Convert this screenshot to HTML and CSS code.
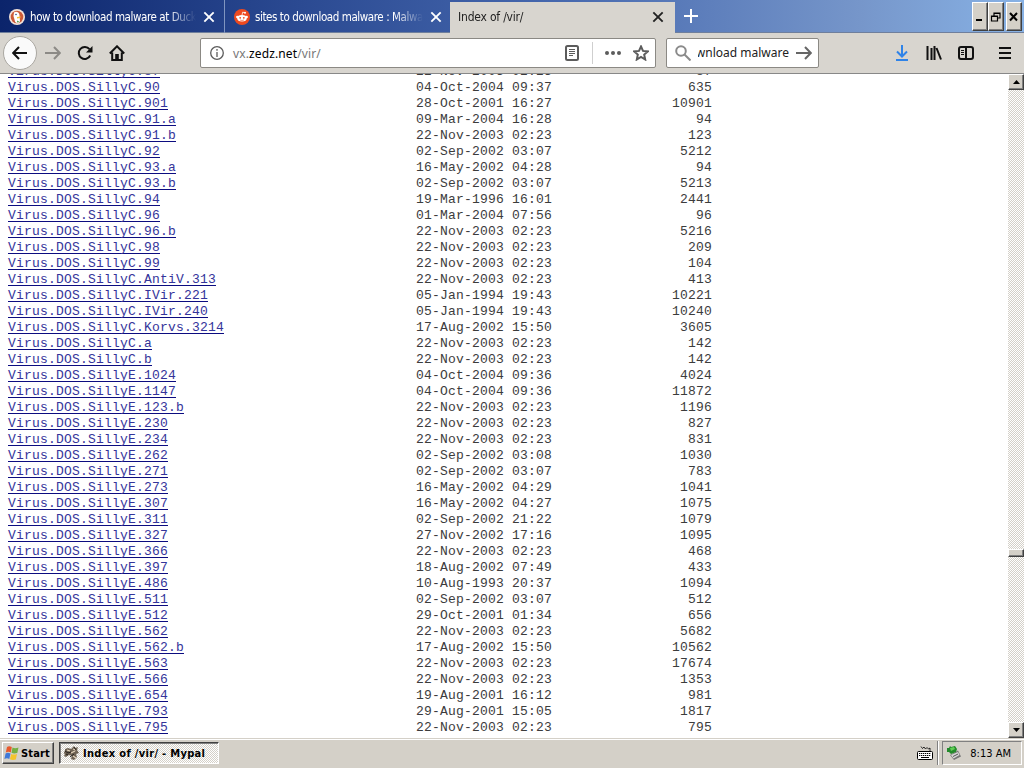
FILE: index.html
```html
<!DOCTYPE html>
<html lang="en">
<head>
    <meta charset="UTF-8">
    <title>Index of /vir/</title>
    <link rel="stylesheet" href="styles.css">
</head>
<body>
    <div class="tab-bar">
        <div class="tab">
            <svg class="favicon" viewBox="0 0 16 16">
                <circle cx="8" cy="8" r="8" fill="#f3e3da"/>
                <circle cx="8" cy="8" r="6.300" fill="#cc5a38"/>
                <path d="M5 3.500c2-1.500 5-.5 5.500 2.500l.5 7c-1.500 1.500-3.500 1.500-4.800 0L4.500 7z" fill="#fff"/>
                <path d="M8 8l4-.6-1 1.600-3 .4z" fill="#f5c03a"/>
                <circle cx="7" cy="5.500" r=".8" fill="#2d4f8e"/>
                <path d="M8 11.500l3 1.500-3 .5z" fill="#5b9e4d"/>
            </svg>
            <span class="tab-title">how to download malware at Duck</span>
            <svg class="close" viewBox="0 0 12 12"><path d="M2 2l8 8M10 2l-8 8"/></svg>
        </div>
        <div class="tab tab-second">
            <svg class="favicon" viewBox="0 0 16 16">
                <circle cx="8" cy="8" r="8" fill="#ee4a20"/>
                <ellipse cx="8" cy="9.300" rx="4.700" ry="3.300" fill="#fff"/>
                <circle cx="3.300" cy="8" r="1.200" fill="#fff"/>
                <circle cx="12.700" cy="8" r="1.200" fill="#fff"/>
                <circle cx="11" cy="3.800" r="1" fill="#fff"/>
                <path d="M8 6l.7-2.800 2 .5" fill="none" stroke="#fff" stroke-width=".8"/>
                <path d="M6 11q2 1 4 0" fill="none" stroke="#ee4a20" stroke-width=".6"/>
                <circle cx="6.200" cy="8.800" r=".9" fill="#ee4a20"/>
                <circle cx="9.800" cy="8.800" r=".9" fill="#ee4a20"/>
            </svg>
            <span class="tab-title">sites to download malware : Malwa</span>
            <svg class="close" viewBox="0 0 12 12"><path d="M2 2l8 8M10 2l-8 8"/></svg>
        </div>
        <div class="tab tab-active">
            <span class="tab-title">Index of /vir/</span>
            <svg class="close" viewBox="0 0 12 12"><path d="M2 2l8 8M10 2l-8 8"/></svg>
        </div>
        <svg class="new-tab" viewBox="0 0 14 14"><path d="M7 0v14M0 7h14"/></svg>
        <div class="window-buttons">
            <button><svg viewBox="0 0 12 12"><path d="M2 9h6" stroke="#000" stroke-width="2"/></svg></button>
            <button><svg viewBox="0 0 12 12"><path d="M4 4.500V2h6v5H8M4 2.500h6M1.500 5H7.500v5h-6zM1.500 5.500h6" fill="none" stroke="#000" stroke-width="1.200"/></svg></button>
            <button class="window-close"><svg viewBox="0 0 12 12"><path d="M2 2l7 7.500M9 2l-7 7.500" stroke="#000" stroke-width="2"/></svg></button>
        </div>
    </div>

    <div class="toolbar">
        <div class="back">
            <svg viewBox="0 0 16 16"><path d="M15 8H1.500M7 2L1.200 8 7 14"/></svg>
        </div>
        <svg class="icon forward" viewBox="0 0 16 16"><path d="M0 8h14.500M9 2l5.800 6L9 14"/></svg>
        <svg class="icon reload" viewBox="0 0 16 16"><path d="M13.200 10.500A6 6 0 1 1 12.500 4.200"/><path class="solid" d="M15.500 1v6.500H9z"/></svg>
        <svg class="icon home" viewBox="0 0 16 16"><path d="M.8 8.500L8 1.300l7.200 7.200M3.200 7.500V15h9.600V7.500"/><path class="solid" d="M6.200 9h3.600v6H6.200z"/></svg>
        <div class="url-bar">
            <svg class="info" viewBox="0 0 14 14"><circle cx="7" cy="7" r="6.300"/><path d="M7 6v5M7 3v1.700"/></svg>
            <span class="url">vx.<b>zedz.net</b>/vir/</span>
            <svg class="reader" viewBox="0 0 14 16"><rect x="1" y="1" width="12" height="14" rx="1.500"/><path class="thin" d="M4 4.500h6M4 6.500h6M4 8.500h6M4 10.500h4"/></svg>
            <span class="separator"></span>
            <svg class="dots" viewBox="0 0 16 4"><circle cx="2" cy="2" r="2"/><circle cx="8" cy="2" r="2"/><circle cx="14" cy="2" r="2"/></svg>
            <svg class="star" viewBox="0 0 16 16"><path d="M8 1.500l2 4.400 4.800.5-3.600 3.200 1 4.900L8 12l-4.200 2.500 1-4.900L1.200 6.400 6 5.900z"/></svg>
        </div>
        <div class="search-bar">
            <svg class="magnifier" viewBox="0 0 16 16"><circle cx="6" cy="6" r="4.800"/><path d="M9.500 9.500l6 6"/></svg>
            <span class="query"><span>wnload malware</span></span>
            <svg class="go" viewBox="0 0 16 16"><path d="M0 8h14.500M9 2l5.800 6L9 14"/></svg>
        </div>
        <div class="actions">
            <svg class="icon download" viewBox="0 0 16 16"><path d="M8 0v11M3 6.500l5 5 5-5M2 15h12"/></svg>
            <svg class="icon library" viewBox="0 0 16 16"><path d="M1.500 1v14M5.500 3v12M8.500 1v14M10.500 3L15 14.500"/></svg>
            <svg class="icon sidebar" viewBox="0 0 16 16"><rect x="1" y="2" width="14" height="12" rx="2"/><path d="M8 2v12"/><path class="thin" d="M3 5.500h3M3 7.500h3M3 9.500h3"/></svg>
            <svg class="icon menu" viewBox="0 0 16 16"><path d="M2 3h12M2 8h12M2 13h12"/></svg>
        </div>
    </div>

    <div class="page">
        <div class="listing">
            <table>
                <tr><td><a href="#">Virus.DOS.SillyC.87</a></td><td>22-Nov-2003 02:23</td><td>87</td></tr>
                <tr><td><a href="#">Virus.DOS.SillyC.90</a></td><td>04-Oct-2004 09:37</td><td>635</td></tr>
                <tr><td><a href="#">Virus.DOS.SillyC.901</a></td><td>28-Oct-2001 16:27</td><td>10901</td></tr>
                <tr><td><a href="#">Virus.DOS.SillyC.91.a</a></td><td>09-Mar-2004 16:28</td><td>94</td></tr>
                <tr><td><a href="#">Virus.DOS.SillyC.91.b</a></td><td>22-Nov-2003 02:23</td><td>123</td></tr>
                <tr><td><a href="#">Virus.DOS.SillyC.92</a></td><td>02-Sep-2002 03:07</td><td>5212</td></tr>
                <tr><td><a href="#">Virus.DOS.SillyC.93.a</a></td><td>16-May-2002 04:28</td><td>94</td></tr>
                <tr><td><a href="#">Virus.DOS.SillyC.93.b</a></td><td>02-Sep-2002 03:07</td><td>5213</td></tr>
                <tr><td><a href="#">Virus.DOS.SillyC.94</a></td><td>19-Mar-1996 16:01</td><td>2441</td></tr>
                <tr><td><a href="#">Virus.DOS.SillyC.96</a></td><td>01-Mar-2004 07:56</td><td>96</td></tr>
                <tr><td><a href="#">Virus.DOS.SillyC.96.b</a></td><td>22-Nov-2003 02:23</td><td>5216</td></tr>
                <tr><td><a href="#">Virus.DOS.SillyC.98</a></td><td>22-Nov-2003 02:23</td><td>209</td></tr>
                <tr><td><a href="#">Virus.DOS.SillyC.99</a></td><td>22-Nov-2003 02:23</td><td>104</td></tr>
                <tr><td><a href="#">Virus.DOS.SillyC.AntiV.313</a></td><td>22-Nov-2003 02:23</td><td>413</td></tr>
                <tr><td><a href="#">Virus.DOS.SillyC.IVir.221</a></td><td>05-Jan-1994 19:43</td><td>10221</td></tr>
                <tr><td><a href="#">Virus.DOS.SillyC.IVir.240</a></td><td>05-Jan-1994 19:43</td><td>10240</td></tr>
                <tr><td><a href="#">Virus.DOS.SillyC.Korvs.3214</a></td><td>17-Aug-2002 15:50</td><td>3605</td></tr>
                <tr><td><a href="#">Virus.DOS.SillyC.a</a></td><td>22-Nov-2003 02:23</td><td>142</td></tr>
                <tr><td><a href="#">Virus.DOS.SillyC.b</a></td><td>22-Nov-2003 02:23</td><td>142</td></tr>
                <tr><td><a href="#">Virus.DOS.SillyE.1024</a></td><td>04-Oct-2004 09:36</td><td>4024</td></tr>
                <tr><td><a href="#">Virus.DOS.SillyE.1147</a></td><td>04-Oct-2004 09:36</td><td>11872</td></tr>
                <tr><td><a href="#">Virus.DOS.SillyE.123.b</a></td><td>22-Nov-2003 02:23</td><td>1196</td></tr>
                <tr><td><a href="#">Virus.DOS.SillyE.230</a></td><td>22-Nov-2003 02:23</td><td>827</td></tr>
                <tr><td><a href="#">Virus.DOS.SillyE.234</a></td><td>22-Nov-2003 02:23</td><td>831</td></tr>
                <tr><td><a href="#">Virus.DOS.SillyE.262</a></td><td>02-Sep-2002 03:08</td><td>1030</td></tr>
                <tr><td><a href="#">Virus.DOS.SillyE.271</a></td><td>02-Sep-2002 03:07</td><td>783</td></tr>
                <tr><td><a href="#">Virus.DOS.SillyE.273</a></td><td>16-May-2002 04:29</td><td>1041</td></tr>
                <tr><td><a href="#">Virus.DOS.SillyE.307</a></td><td>16-May-2002 04:27</td><td>1075</td></tr>
                <tr><td><a href="#">Virus.DOS.SillyE.311</a></td><td>02-Sep-2002 21:22</td><td>1079</td></tr>
                <tr><td><a href="#">Virus.DOS.SillyE.327</a></td><td>27-Nov-2002 17:16</td><td>1095</td></tr>
                <tr><td><a href="#">Virus.DOS.SillyE.366</a></td><td>22-Nov-2003 02:23</td><td>468</td></tr>
                <tr><td><a href="#">Virus.DOS.SillyE.397</a></td><td>18-Aug-2002 07:49</td><td>433</td></tr>
                <tr><td><a href="#">Virus.DOS.SillyE.486</a></td><td>10-Aug-1993 20:37</td><td>1094</td></tr>
                <tr><td><a href="#">Virus.DOS.SillyE.511</a></td><td>02-Sep-2002 03:07</td><td>512</td></tr>
                <tr><td><a href="#">Virus.DOS.SillyE.512</a></td><td>29-Oct-2001 01:34</td><td>656</td></tr>
                <tr><td><a href="#">Virus.DOS.SillyE.562</a></td><td>22-Nov-2003 02:23</td><td>5682</td></tr>
                <tr><td><a href="#">Virus.DOS.SillyE.562.b</a></td><td>17-Aug-2002 15:50</td><td>10562</td></tr>
                <tr><td><a href="#">Virus.DOS.SillyE.563</a></td><td>22-Nov-2003 02:23</td><td>17674</td></tr>
                <tr><td><a href="#">Virus.DOS.SillyE.566</a></td><td>22-Nov-2003 02:23</td><td>1353</td></tr>
                <tr><td><a href="#">Virus.DOS.SillyE.654</a></td><td>19-Aug-2001 16:12</td><td>981</td></tr>
                <tr><td><a href="#">Virus.DOS.SillyE.793</a></td><td>29-Aug-2001 15:05</td><td>1817</td></tr>
                <tr><td><a href="#">Virus.DOS.SillyE.795</a></td><td>22-Nov-2003 02:23</td><td>795</td></tr>
            </table>
        </div>
        <div class="scrollbar">
            <div class="scroll-button"><svg viewBox="0 0 7 4"><path d="M3.500 0L7 4H0z"/></svg></div>
            <div class="track-top"></div>
            <div class="thumb"></div>
            <div class="track-bottom"></div>
            <div class="scroll-button"><svg viewBox="0 0 7 4"><path d="M0 0h7L3.500 4z"/></svg></div>
        </div>
    </div>

    <div class="taskbar">
        <button class="start">
            <svg viewBox="0 0 16 16">
                <path d="M3 2q2-1.500 4.800 0L6.800 7.500Q4.500 6 1.800 7.500z" fill="#e8592c"/>
                <path d="M8.500 2.500q2.500 1.500 6 0L13.300 8Q10 9 7.500 7.800z" fill="#74b042"/>
                <path d="M1.600 8.500q2.200-1.500 4.900 0L5.300 14Q3 12.500.4 14z" fill="#3f79d8"/>
                <path d="M7.200 9q2.200 1.200 5.800 0l-1.200 5.500Q8.500 15.500 6 14.200z" fill="#f4c42c"/>
            </svg>
            Start
        </button>
        <button class="task">
            <svg viewBox="0 0 16 16">
                <path d="M1 4l3-1 3 1 3-3 1 2 3-1-1 3 2 3-3 1 1 3-3 3-3-1 1-3-3-1-3 2-2-1 1-2-2-1 2-2z" fill="#6e6253"/>
                <path d="M3 5l3 1M9 4l3 1M7 8l4-2M9 11l3 2" stroke="#e4d4bc" stroke-width="1.300"/>
                <path d="M1 6l3 2 3-1M10 2l2 3M6 12l4-3M2 9l2 1" fill="none" stroke="#241f1a"/>
            </svg>
            Index of /vir/ - Mypal
        </button>
        <svg class="keyboard" viewBox="0 0 16 14">
            <path d="M4 .5l1.500 2 1.500-1.500 1.500 2 1.500-1.500 1.500 1.500 1.500-1v3" fill="none" stroke="#000" stroke-width=".8"/>
            <rect x=".5" y="5.500" width="15" height="8" rx="1" fill="#fff" stroke="#000"/>
            <path d="M2 7.500h12M2 9.500h12" stroke="#000" stroke-dasharray="1.300 .7"/>
            <path d="M4 11.500h8" stroke="#000"/>
        </svg>
        <span class="tray-divider"></span>
        <div class="tray">
            <svg viewBox="0 0 16 16">
                <path d="M4 10l8-4.500 3 6L8 15z" fill="#777"/>
                <path d="M5 10l7-3 1.500 3-6 3.500z" fill="#d8d8d8"/>
                <path d="M7 11.500l5-2.500" stroke="#555"/>
                <path d="M1 3l2 0 1-2 1 1 4-1 2 3-1 3-5 2-2-2-2 0z" fill="#238a2b"/>
                <path d="M4 3l4-1 1 2-4 2z" fill="#62cf55"/>
            </svg>
            <span>8:13 AM</span>
        </div>
    </div>
</body>
</html>
```
FILE: styles.css
```css
* {
    box-sizing: border-box;
}

body {
    margin: 0;
    height: 768px;
    overflow: hidden;
    display: flex;
    flex-direction: column;
    font-family: "DejaVu Sans Condensed", "DejaVu Sans", sans-serif;
    font-stretch: condensed;
    font-size: 11px;
    color: #000;
    background-color: #fff;
}

svg {
    display: block;
    flex: none;
}

button {
    font: inherit;
    color: #000;
    padding: 0;
    border-radius: 0;
}

/* tabs */
.tab-bar {
    height: 33px;
    flex: none;
    display: flex;
    background: linear-gradient(to right, #0b246b 0, #2b4a92 300px, #4668ae 560px, #7696ca 860px, #88b2e5 100%);
    border-bottom: 1px solid #6f7f9c;
}

.tab {
    width: 225px;
    height: 33px;
    padding: 1px 10px 0 9px;
    display: flex;
    align-items: center;
    color: #fff;
    border-right: 1px solid #8095c0;
}

.tab-second {
    border-right: none;
}

.tab-active {
    height: 33px;
    margin-top: 2px;
    padding: 0 10px 3px 8px;
    color: #222;
    background-color: #d8d5cf;
    border-right: none;
}

.favicon {
    width: 16px;
    height: 16px;
    margin-right: 5px;
}

.tab-title {
    flex: 1;
    white-space: nowrap;
    margin-right: 6px;
    font-size: 11.5px;
    letter-spacing: -0.42px;
    mask-image: linear-gradient(to left, transparent, #000 28px);
}

.tab-active .tab-title {
    font-size: 12px;
    letter-spacing: -0.2px;
}

.close {
    width: 14px;
    height: 14px;
    fill: none;
    stroke: currentColor;
    stroke-width: 1.6;
}

.new-tab {
    width: 14px;
    height: 14px;
    margin: 9px 0 0 9px;
    stroke: #fff;
    stroke-width: 2;
}

.window-buttons {
    display: flex;
    margin: 2px 2px 0 auto;
}

.window-buttons button {
    width: 16px;
    height: 29px;
    display: flex;
    align-items: center;
    justify-content: center;
    background-color: #d4d0c8;
    border: 1px solid;
    border-color: #fff #404040 #404040 #fff;
    box-shadow: inset -1px -1px #808080;
}

.window-buttons svg {
    width: 12px;
    height: 12px;
}

.window-buttons .window-close {
    margin-left: 2px;
}

/* navigation toolbar */
.toolbar {
    height: 41px;
    flex: none;
    display: flex;
    align-items: center;
    padding-left: 3px;
    background-color: #d8d5cf;
    border-bottom: 1px solid #888;
}

.toolbar svg {
    fill: none;
    stroke: #111;
    stroke-width: 2;
}

.back {
    width: 34px;
    height: 34px;
    display: flex;
    align-items: center;
    justify-content: center;
    border: 1px solid #aaa7a1;
    border-radius: 50%;
    background-color: #fafafa;
}

.icon, .back svg {
    width: 16px;
    height: 16px;
}

.toolbar .forward {
    margin-left: 8px;
    stroke: #8c8a86;
}

.reload, .home {
    margin-left: 16px;
}

.toolbar .solid {
    fill: #111;
    stroke: none;
}

.toolbar .thin {
    stroke-width: 1;
}

.url-bar, .search-bar {
    height: 30px;
    display: flex;
    align-items: center;
    background-color: #fff;
    border: 1px solid #8b8984;
    border-radius: 2px;
    font-family: "Noto Sans", sans-serif;
    font-size: 12px;
}

.url-bar {
    width: 456px;
    margin-left: 75px;
    padding: 0 6px 0 9px;
}

.url-bar svg {
    stroke: #5c5c5c;
}

.url-bar .info {
    width: 14px;
    height: 14px;
    stroke-width: 1.3;
}

.url {
    flex: 1;
    margin-left: 9px;
    color: #777;
    letter-spacing: 0.12px;
}

.url b {
    font-weight: normal;
    color: #000;
}

.reader {
    width: 14px;
    height: 16px;
}

.separator {
    width: 1px;
    height: 22px;
    margin: 0 12px 0 13px;
    background-color: #cfcfcf;
}

.url-bar .dots {
    width: 16px;
    height: 4px;
    margin-right: 12px;
    fill: #5c5c5c;
    stroke: none;
}

.star {
    width: 16px;
    height: 16px;
}

.search-bar {
    width: 153px;
    margin-left: 10px;
    padding: 0 6px 0 8px;
}

.search-bar svg {
    width: 16px;
    height: 16px;
    stroke: #666;
}

.search-bar .magnifier {
    stroke: #8a8a8a;
}

.query {
    width: 91px;
    height: 18px;
    margin: 0 7px 0 7px;
    display: flex;
    justify-content: flex-end;
    overflow: hidden;
    white-space: nowrap;
    color: #222;
}

.actions {
    display: flex;
    gap: 16px;
    margin-left: auto;
    padding-right: 11px;
}

.toolbar .download {
    stroke: #2f83e8;
}

.menu {
    margin-left: 7px;
}

/* directory listing */
.page {
    flex: 1;
    min-height: 0;
    display: flex;
}

.listing {
    flex: 1;
    overflow: hidden;
    padding-left: 8px;
}

.listing table {
    margin-top: -10px;
    border-collapse: collapse;
    font-family: "Liberation Mono", "Courier New", monospace;
    font-size: 13px;
    line-height: 16px;
    letter-spacing: 0.198px;
}

.listing td {
    width: 136px;
    height: 16px;
    padding: 0;
    color: #3c3c3c;
    white-space: pre;
}

.listing td:first-child {
    width: 408px;
}

.listing td:last-child {
    width: 160px;
    text-align: right;
}

.listing a {
    color: #34349a;
    text-decoration-color: #0c0c80;
    text-underline-offset: 2px;
    text-decoration-thickness: 1px;
    text-decoration-skip-ink: none;
}

.scrollbar {
    width: 16px;
    display: flex;
    flex-direction: column;
    background: repeating-conic-gradient(#d4d0c8 0 25%, #fff 0 50%) 0 0 / 2px 2px;
}

.scroll-button {
    height: 16px;
    display: flex;
    align-items: center;
    justify-content: center;
}

.scroll-button svg {
    width: 7px;
    height: 4px;
}

.scroll-button, .thumb {
    background-color: #d4d0c8;
    border: 1px solid;
    border-color: #fff #404040 #404040 #fff;
    box-shadow: inset -1px -1px #808080;
}

.track-top {
    height: 459px;
}

.thumb {
    height: 8px;
}

.track-bottom {
    flex: 1;
}

/* taskbar */
.taskbar {
    height: 30px;
    flex: none;
    display: flex;
    align-items: center;
    padding: 1px 2px 2px;
    background-color: #d4d0c8;
    border-top: 1px solid #d4d0c8;
    box-shadow: inset 0 1px #fff;
}

.start, .task {
    display: flex;
    align-items: center;
    font-weight: bold;
    border: 1px solid;
}

.start {
    width: 52px;
    height: 22px;
    padding-left: 1px;
    gap: 1px;
    background-color: #d4d0c8;
    border-color: #fff #404040 #404040 #fff;
    box-shadow: inset -1px -1px #808080;
    letter-spacing: 0.15px;
}

.task {
    width: 160px;
    height: 22px;
    margin-left: 5px;
    padding-left: 4px;
    gap: 3px;
    background: repeating-conic-gradient(#d4d0c8 0 25%, #fff 0 50%) 0 0 / 2px 2px;
    border-color: #404040 #fff #fff #404040;
    box-shadow: inset 1px 1px #808080;
    letter-spacing: 0.32px;
}

.start svg, .task svg, .tray svg {
    width: 16px;
    height: 16px;
}

.keyboard {
    width: 16px;
    height: 14px;
    margin-left: auto;
}

.tray-divider {
    width: 2px;
    height: 24px;
    margin: 0 3px 0 4px;
    border-left: 1px solid #808080;
    border-right: 1px solid #fff;
}

.tray {
    width: 80px;
    height: 24px;
    padding: 0 10px 0 3px;
    display: flex;
    align-items: center;
    justify-content: space-between;
    border: 1px solid;
    border-color: #808080 #fff #fff #808080;
}
```
